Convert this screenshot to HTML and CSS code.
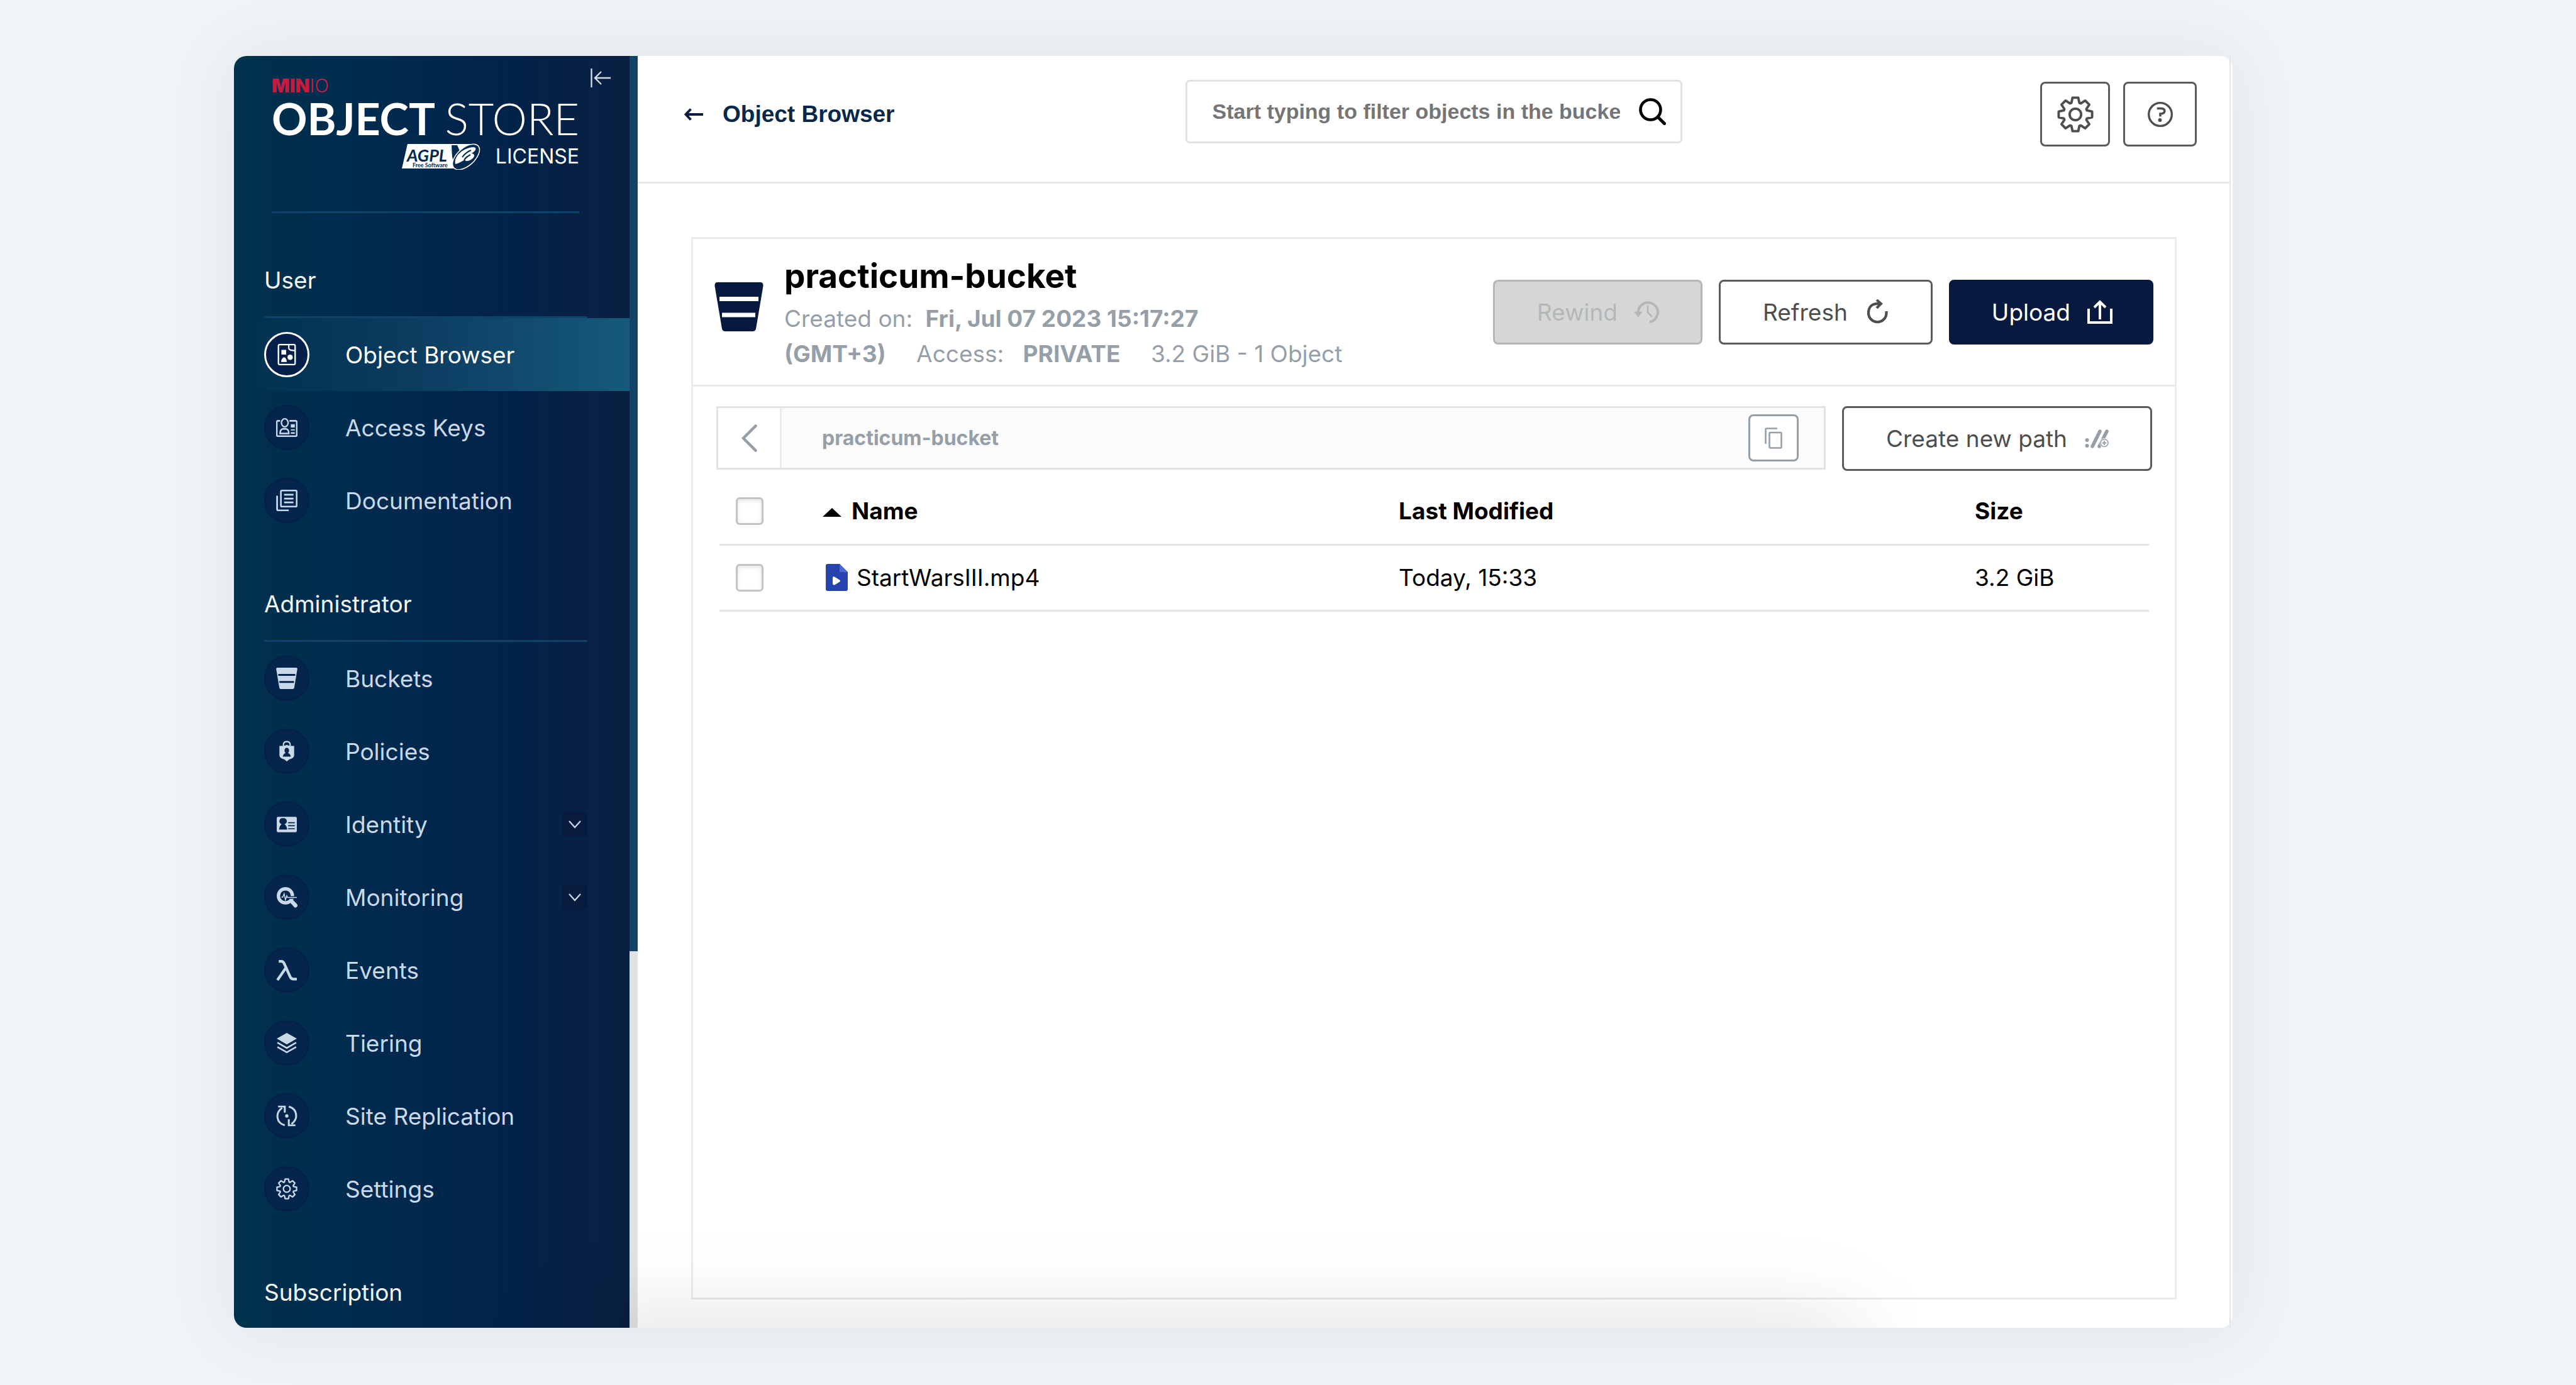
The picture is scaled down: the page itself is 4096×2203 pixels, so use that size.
FILE: index.html
```html
<!DOCTYPE html>
<html lang="en">
<head>
<meta charset="utf-8">
<title>MinIO Object Store</title>
<meta name="viewport" content="width=device-width, initial-scale=1">
<link rel="stylesheet" href="styles.css">
</head>
<body>
<svg class="symbols" aria-hidden="true">
  <symbol id="gear" viewBox="-12 -12 24 24">
    <path d="M-2.6-7.6L-1.9-11H1.9L2.6-7.6L3.54-7.21L6.43-9.12L9.12-6.43L7.21-3.54L7.6-2.6L11-1.9V1.9L7.6 2.6L7.21 3.54L9.12 6.43L6.43 9.12L3.54 7.21L2.6 7.6L1.9 11H-1.9L-2.6 7.6L-3.54 7.21L-6.43 9.12L-9.12 6.43L-7.21 3.54L-7.6 2.6L-11 1.9V-1.9L-7.6-2.6L-7.21-3.54L-9.12-6.43L-6.43-9.12L-3.54-7.21Z" fill="none" stroke="currentColor" stroke-width="1.6" stroke-linejoin="round"/>
    <circle r="3.8" fill="none" stroke="currentColor" stroke-width="1.6"/>
  </symbol>
  <symbol id="bucket" viewBox="0 0 78 78">
    <path fill="currentColor" fill-rule="evenodd" d="M5 0H73Q78 0 77.500 6L66 74Q65 78 61 78H17Q13 78 12 74L0.500 6Q0 0 5 0ZM8 23V30H70V23ZM12 48.500V55.500H65V48.500Z"/>
  </symbol>
  <symbol id="chevron" viewBox="0 0 20 20">
    <path d="M1 5L10 15L19 5" fill="none" stroke="currentColor" stroke-width="2.200"/>
  </symbol>
</svg>

<div class="app">
  <aside class="sidebar">
    <div class="sidebar-body">
      <button class="collapse" type="button" aria-label="Collapse menu">
        <svg viewBox="0 0 32 30"><path d="M1.500 0V30M7 15H32M17 5L7 15L17 25" fill="none" stroke="currentColor" stroke-width="2.400"/></svg>
      </button>
      <div class="logo">
        <div class="logo-brand"><b>MIN</b>IO</div>
        <div class="logo-name"><b>OBJECT</b><span>STORE</span></div>
        <div class="logo-license">
          <svg class="agpl" viewBox="0 0 125 42" role="img" aria-label="AGPL v3 Free Software">
            <path d="M9 1H118L88 40H0Z" fill="#fff"/>
            <text class="agpl-name" x="8" y="29">AGPL</text>
            <text class="agpl-note" x="17" y="38">Free Software</text>
            <path d="M76 3L82 30L92 12L88 3Z" fill="#022950"/>
            <path d="M76 3L80 24L79 3Z" fill="#fff"/>
            <ellipse cx="102" cy="21.500" rx="26" ry="14" transform="rotate(-42 102 21.500)" fill="#022950" stroke="#fff" stroke-width="1.500"/>
            <path d="M85 33C82 22 96 7 114 6C121 7 116 14 110 16C120 16 114 27 104 28C100 29 100 25 103 24C98 27 91 32 85 33Z" fill="#fff"/>
            <path d="M96 22Q102 14 110 11M99 26Q103 21 109 18" stroke="#022950" stroke-width="2" fill="none"/>
          </svg>
          <span>LICENSE</span>
        </div>
      </div>
      <nav>
        <section class="group">
          <h2 class="group-head">User</h2>
          <a class="item active" href="#"><span class="disc"><svg viewBox="0 0 32 32"><rect x="3.500" y="1" width="25" height="30" rx="2" fill="none" stroke="currentColor" stroke-width="2.200"/><path d="M19 1V7Q20 10 28 10" fill="none" stroke="currentColor" stroke-width="2"/><path d="M8 9H15V16H8ZM7.500 27Q8 21 12 20Q15.500 21 16 27Z" fill="currentColor"/><circle cx="21" cy="20" r="4" fill="currentColor"/></svg></span>Object Browser</a>
          <a class="item" href="#"><span class="disc"><svg viewBox="0 0 32 32"><path d="M6 6H3Q1 6 1 8V27Q1 29 3 29H29Q31 29 31 27V8Q31 6 29 6H20" fill="none" stroke="currentColor" stroke-width="2.400"/><ellipse cx="13" cy="9" rx="5" ry="6" fill="none" stroke="currentColor" stroke-width="2.200"/><path d="M6 25Q6 19 10 18H15Q19 19 19 25Z" fill="none" stroke="currentColor" stroke-width="2.400"/><path d="M22 11H28V16H22ZM22 18.500H28V20.500H22ZM22 23H28V25.500H22Z" fill="currentColor"/></svg></span>Access Keys</a>
          <a class="item" href="#"><span class="disc"><svg viewBox="0 0 32 32"><rect x="7.200" y="1.200" width="23.600" height="24" rx="1.500" fill="none" stroke="currentColor" stroke-width="2.400"/><path d="M12 7.500H26M12 13.200H26M12 19H26" stroke="currentColor" stroke-width="2.600"/><path d="M1.500 9V29Q1.500 31 3.500 31H19" fill="none" stroke="currentColor" stroke-width="2.600"/></svg></span>Documentation</a>
        </section>
        <section class="group">
          <h2 class="group-head">Administrator</h2>
          <a class="item" href="#"><span class="disc"><svg><use href="#bucket"/></svg></span>Buckets</a>
          <a class="item" href="#"><span class="disc"><svg viewBox="0 0 32 32"><path d="M11 8V6Q11 1.500 16 1.500Q21 1.500 21 6V8" fill="none" stroke="currentColor" stroke-width="2"/><path fill="currentColor" fill-rule="evenodd" d="M5 8Q11 8.500 16 6.500Q21 8.500 27 8V22Q27 26 20 28L16 31L12 28Q5 26 5 22ZM16 10.500A4 4.500 0 0 0 14 18.500Q10.500 20 10 24H22Q21.500 20 18 18.500A4 4.500 0 0 0 16 10.500Z"/></svg></span>Policies</a>
          <a class="item" href="#"><span class="disc"><svg viewBox="0 0 32 32"><path fill="currentColor" fill-rule="evenodd" d="M3 5H29Q31 5 31 7V26Q31 28 29 28H3Q1 28 1 26V7Q1 5 3 5ZM10.500 7A4.500 4.500 0 0 0 8.500 16Q5 18 4.500 24H16.500Q16 18 12.500 16A4.500 4.500 0 0 0 10.500 7ZM18 13V14.500H28V13ZM18 17.500V19H28V17.500ZM18 22V23.500H28V22Z"/></svg></span>Identity<span class="toggle"><svg><use href="#chevron"/></svg></span></a>
          <a class="item" href="#"><span class="disc"><svg viewBox="0 0 32 32"><circle cx="14" cy="14" r="10.500" fill="none" stroke="currentColor" stroke-width="5"/><path d="M23 22L29 28.500" stroke="currentColor" stroke-width="6" stroke-linecap="round"/><path d="M20 16.500H31" stroke="#05254c" stroke-width="4"/><path d="M8 16H10L12 11L14 20L16 14L17 16.500H31" fill="none" stroke="currentColor" stroke-width="1.500"/></svg></span>Monitoring<span class="toggle"><svg><use href="#chevron"/></svg></span></a>
          <a class="item" href="#"><span class="disc"><svg viewBox="0 0 32 32"><path d="M4 3H8Q11 3 12.500 7L21 26Q22.500 29.500 26 29.500H31M14.500 13L2 31" fill="none" stroke="currentColor" stroke-width="4"/></svg></span>Events</a>
          <a class="item" href="#"><span class="disc"><svg viewBox="0 0 32 32"><path d="M16 1L31 9.500L16 18L1 9.500Z" fill="currentColor"/><path d="M2 15.500L16 23.500L30 15.500M2 22L16 30L30 22" fill="none" stroke="currentColor" stroke-width="2.400"/></svg></span>Tiering</a>
          <a class="item" href="#"><span class="disc"><svg viewBox="0 0 32 32"><path d="M13 30Q2 27 2 16Q2 9 9 4M19 2Q30 5 30 16Q30 23 23 28" fill="none" stroke="currentColor" stroke-width="2.800"/><path d="M3 2H13V11M29 30H19V21" fill="none" stroke="currentColor" stroke-width="2.800"/><circle cx="16" cy="16" r="2.500" fill="currentColor"/></svg></span>Site Replication</a>
          <a class="item" href="#"><span class="disc"><svg><use href="#gear"/></svg></span>Settings</a>
        </section>
        <section class="group">
          <h2 class="group-head">Subscription</h2>
        </section>
      </nav>
    </div>
    <div class="scrollbar"><div class="thumb"></div></div>
  </aside>

  <main class="main">
    <header class="topbar">
      <a class="back" href="#">
        <svg viewBox="0 0 30 20"><path d="M2 10H30M10.500 1.500L2.500 10L10.500 18.500" fill="none" stroke="currentColor" stroke-width="4"/></svg>
        Object Browser
      </a>
      <div class="search">
        <input type="text" aria-label="Filter objects" placeholder="Start typing to filter objects in the bucket">
        <svg viewBox="0 0 43 43"><circle cx="18.500" cy="18.500" r="16" fill="none" stroke="currentColor" stroke-width="4.600"/><path d="M30 30L40.500 40.500" stroke="currentColor" stroke-width="5" stroke-linecap="round"/></svg>
      </div>
      <div class="actions">
        <button class="btn square" type="button" aria-label="Settings"><svg class="icon-gear"><use href="#gear"/></svg></button>
        <button class="btn square wide" type="button" aria-label="Help"><svg class="icon-help" viewBox="0 0 38 38"><circle cx="19" cy="19" r="17.400" fill="none" stroke="currentColor" stroke-width="3.200"/><path d="M14 10H20Q25.500 10 25.500 13.800Q25.500 18 19 18V22" fill="none" stroke="currentColor" stroke-width="3.400"/><circle cx="18.500" cy="27.500" r="2.800" fill="currentColor"/></svg></button>
      </div>
    </header>

    <section class="panel">
      <div class="bucket-head">
        <svg class="bucket-icon"><use href="#bucket"/></svg>
        <div class="bucket-info">
          <h1>practicum-bucket</h1>
          <p><span>Created on:</span> <b class="date">Fri, Jul 07 2023 15:17:27<br>(GMT+3)</b> <span class="gap">Access:</span> <b class="access">PRIVATE</b> <span class="gap">3.2 GiB - 1 Object</span></p>
        </div>
        <div class="bucket-actions">
          <button class="btn" type="button" disabled>Rewind <svg viewBox="0 0 40 40"><path d="M6 24V20A15.500 15.500 0 1 1 24 36" fill="none" stroke="currentColor" stroke-width="4"/><path d="M0 20H12L6 28Z" fill="currentColor" stroke="currentColor"/><path d="M21 10V21L28 28" fill="none" stroke="currentColor" stroke-width="2.600"/></svg></button>
          <button class="btn" type="button">Refresh <svg viewBox="0 0 40 40"><path d="M24 7Q6 6 6 22A14.200 14.200 0 0 0 34.500 22V19" fill="none" stroke="currentColor" stroke-width="4.200"/><path d="M19 1L26 7L19 14" fill="none" stroke="currentColor" stroke-width="4"/></svg></button>
          <button class="btn primary" type="button">Upload <svg viewBox="0 0 40 40"><path d="M2 15V37H38V15M20 32V6M11 13L20 4L29 13" fill="none" stroke="currentColor" stroke-width="4"/></svg></button>
        </div>
      </div>

      <div class="path-row">
        <div class="path">
          <button class="path-back" type="button" aria-label="Up one level"><svg viewBox="0 0 26 46"><path d="M23.500 2.500L3 23L23.500 43.500" fill="none" stroke="currentColor" stroke-width="4.600" stroke-linecap="round"/></svg></button>
          <a class="crumb" href="#">practicum-bucket</a>
          <button class="copy" type="button" aria-label="Copy path"><svg viewBox="0 0 28 34"><rect x="7.500" y="8" width="19" height="24.500" rx="1.500" fill="none" stroke="currentColor" stroke-width="2.600"/><path d="M1.500 26V3Q1.500 1.500 3 1.500H20" fill="none" stroke="currentColor" stroke-width="2.600"/></svg></button>
        </div>
        <button class="btn" type="button">Create new path <svg class="icon-path" viewBox="0 0 40 40"><circle cx="4.500" cy="22" r="3" /><circle cx="4.500" cy="31" r="3"/><path d="M13 32L25 8M24 32L36 8" fill="none" stroke="currentColor" stroke-width="5.500" stroke-linecap="round"/><circle cx="32" cy="26.500" r="7.500" fill="#fff"/><circle cx="32" cy="26.500" r="6" fill="none" stroke="currentColor" stroke-width="1.600"/><path d="M32 23V30M28.500 26.500H35.500" stroke="currentColor" stroke-width="1.800"/></svg></button>
      </div>

      <table class="objects">
        <colgroup><col class="col-check"><col class="col-name"><col class="col-date"><col></colgroup>
        <thead>
          <tr>
            <th><input type="checkbox" aria-label="Select all"></th>
            <th><span class="sort"></span>Name</th>
            <th>Last Modified</th>
            <th>Size</th>
          </tr>
        </thead>
        <tbody>
          <tr>
            <td><input type="checkbox" aria-label="Select StartWarsIII.mp4"></td>
            <td><a class="file" href="#"><svg viewBox="0 0 35 43"><path d="M3 0H22L35 13V40Q35 43 32 43H3Q0 43 0 40V3Q0 0 3 0Z" fill="#2544ad"/><path d="M22 0L35 13H22Z" fill="#4c68cd"/><path d="M11 22Q11 19 14 20.500L22 25.500Q24 27 22 28.500L14 33.500Q11 34 11 31Z" fill="#fff"/></svg>StartWarsIII.mp4</a></td>
            <td>Today, 15:33</td>
            <td>3.2 GiB</td>
          </tr>
        </tbody>
      </table>
    </section>
  </main>
  <div class="edge-shade"></div>
</div>
</body>
</html>
```

FILE: styles.css
```css
* { box-sizing: border-box; }

body {
  margin: 0;
  height: 100vh;
  display: flex;
  padding: 89px 546px 91px 372px;
  background: #eef4f7;
  font-family: Inter, "Liberation Sans", sans-serif;
  font-size: 37px;
  color: #000;
}

h1, h2, p { margin: 0; }
a { color: inherit; text-decoration: none; }
button, input { font: inherit; }
svg { display: block; flex: none; }
.symbols { position: absolute; width: 0; height: 0; }

.app {
  flex: 1;
  min-height: 0;
  position: relative;
  display: flex;
  background: #fff;
  border-radius: 20px;
  box-shadow: 0 0 110px 10px rgba(0, 0, 0, 0.06);
}

/* Sidebar */
.sidebar {
  flex: none;
  width: 642px;
  display: flex;
  overflow: hidden;
  border-radius: 20px 0 0 20px;
}
.sidebar-body {
  flex: 1;
  position: relative;
  background: linear-gradient(90deg, #00324d 0%, #00294e 40%, #02234a 65%, #0a2042 100%);
}
.scrollbar { width: 13px; background: #e2e2e2; }
.thumb { height: 70.4%; background: #11436a; }

.collapse {
  position: absolute;
  top: 20px;
  right: 30px;
  padding: 0;
  border: 0;
  background: none;
  color: #d5dbe4;
}
.collapse svg { width: 32px; height: 30px; }

.logo {
  margin: 0 80px 0 60px;
  padding-top: 31px;
  height: 250px;
  border-bottom: 3px solid #0f4269;
  color: #fff;
  font-family: Lato, sans-serif;
  font-weight: 300;
}
.logo-brand { font-family: Inter, sans-serif; font-size: 30px; line-height: 32px; color: #c51b3f; }
.logo-brand b { font-weight: 900; }
.logo-name {
  display: flex;
  justify-content: space-between;
  font-size: 70px;
  line-height: 72px;
}
.logo-name b { font-weight: 700; }
.logo-license {
  display: flex;
  justify-content: flex-end;
  align-items: center;
  gap: 24px;
  margin-top: 4px;
  font-family: Inter, sans-serif;
  font-size: 32px;
  font-weight: 400;
  line-height: 42px;
}
.agpl { width: 125px; height: 42px; }
.agpl-name { font: italic 700 27px Lato, sans-serif; fill: #022950; }
.agpl-note { font: 700 9px Lato, sans-serif; fill: #022950; }

.group-head {
  margin: 0 67px 0 48px;
  padding: 80px 0 30px;
  border-bottom: 3px solid #0f4269;
  font-size: 37px;
  line-height: 54px;
  font-weight: 400;
  color: #f4f7fa;
}
.item {
  display: flex;
  align-items: center;
  height: 116px;
  padding: 0 67px 0 48px;
  font-size: 37px;
  color: #c9d9e9;
}
.item.active {
  color: #fff;
  background: linear-gradient(90deg, rgba(21, 90, 122, 0) 0%, #0f4568 62%, #155a7a 100%);
}
.disc {
  flex: none;
  display: flex;
  align-items: center;
  justify-content: center;
  width: 72px;
  height: 72px;
  margin-right: 57px;
  border: 2px solid #061f49;
  border-radius: 50%;
  background: #05254c;
}
.disc svg { width: 34px; height: 34px; }
.active .disc { border: 3px solid #fff; background: #04204b; }
.toggle {
  display: flex;
  align-items: center;
  justify-content: center;
  width: 40px;
  height: 40px;
  margin-left: auto;
  border-radius: 5px;
  background: #081b3e;
}
.toggle svg { width: 20px; height: 20px; }

/* Main column */
.main {
  flex: 1;
  min-width: 0;
  display: flex;
  flex-direction: column;
  margin-right: 3px;
  border-right: 2px solid #e3e5e6;
}
.topbar {
  display: grid;
  grid-template-columns: 1fr 790px 1fr;
  align-items: start;
  padding: 38px 52px 53px;
  border-bottom: 3px solid #e6e8e9;
}
.back {
  display: flex;
  align-items: center;
  gap: 31px;
  padding-left: 22px;
  height: 109px;
  font-family: "Liberation Sans", Arial, sans-serif;
  font-weight: 700;
  color: #07284a;
}
.back svg { width: 30px; height: 20px; color: #081c42; }
.search { position: relative; }
.search input {
  display: block;
  width: 100%;
  height: 101px;
  padding: 0 96px 0 40px;
  border: 3px solid #e2e2e2;
  border-radius: 7px;
  background: #fff;
  font: 700 34px "Liberation Sans", Arial, sans-serif;
  color: #000;
}
.search input::placeholder { color: #757575; opacity: 1; }
.search svg { position: absolute; right: 26px; top: 29px; width: 43px; height: 43px; }
.actions { display: flex; justify-content: flex-end; gap: 21px; padding-top: 3px; }

.btn {
  display: flex;
  align-items: center;
  gap: 27px;
  height: 103px;
  padding: 0 65px 0 67px;
  border: 3px solid #5a5c5c;
  border-radius: 8px;
  background: #fff;
  font-size: 37px;
  color: #4d4f4f;
  white-space: nowrap;
}
.btn svg { width: 40px; height: 40px; }
.btn:disabled { background: #d5d7d7; border-color: #b5b7b7; color: #b5b7b7; }
.btn.primary { padding: 0 62px 0 65px; background: #07193e; border-color: #07193e; color: #fff; }
.btn.square { width: 111px; padding: 0; justify-content: center; }
.btn.wide { width: 117px; }
.btn .icon-gear { width: 58px; height: 58px; }
.btn .icon-help { width: 40px; height: 40px; }
.btn .icon-path { color: #969fa8; fill: #969fa8; }

.panel {
  flex: 1;
  margin: 85px 84px 45px 85px;
  border: 3px solid #eaecec;
}
.bucket-head {
  display: flex;
  align-items: center;
  height: 235px;
  padding: 0 34px;
  border-bottom: 3px solid #eaecec;
}
.bucket-icon { width: 78px; height: 78px; margin-right: 33px; margin-top: -16px; color: #07193e; }
.bucket-info { flex: 1; margin-top: -2px; }
.bucket-info h1 { font-size: 53px; line-height: 80px; font-weight: 700; }
.bucket-info p { line-height: 56px; color: #969fa8; }
.bucket-info b { font-weight: 700; }
.date { margin-left: 10px; }
.gap { margin-left: 38px; }
.access { margin-left: 20px; }
.bucket-actions { display: flex; gap: 26px; }

.path-row { display: flex; gap: 26px; padding: 31px 36px 0 37px; }
.path {
  flex: 1;
  display: flex;
  align-items: center;
  height: 101px;
  border: 3px solid #e2e2e2;
  background: #fbfbfb;
  color: #969fa8;
}
.path-back {
  display: flex;
  align-items: center;
  justify-content: center;
  align-self: stretch;
  width: 101px;
  padding: 0;
  border: 0;
  border-right: 3px solid #eaeded;
  background: #fff;
  color: #969fa8;
}
.path-back svg { width: 25px; height: 44px; }
.crumb { flex: 1; padding-left: 64px; font-size: 32px; font-weight: 700; }
.copy {
  display: flex;
  align-items: center;
  justify-content: center;
  width: 80px;
  height: 75px;
  margin-right: 40px;
  padding: 0;
  border: 3px solid #969fa8;
  border-radius: 8px;
  background: #fff;
  color: #969fa8;
}
.copy svg { width: 28px; height: 34px; }

/* Object list */
.objects {
  width: calc(100% - 83px);
  margin: 12px 41px 0 42px;
  table-layout: fixed;
  border-collapse: collapse;
}
.col-check { width: 164px; }
.col-name, .col-date { width: 40.3%; }
.objects th, .objects td {
  height: 105px;
  padding: 0;
  border-bottom: 3px solid #e2e3e3;
  text-align: left;
  vertical-align: middle;
}
.objects th { font-size: 37px; font-weight: 700; }
.objects input {
  appearance: none;
  display: block;
  width: 44px;
  height: 44px;
  margin: 0 0 0 26px;
  border: 3px solid #c4c4c4;
  border-radius: 6px;
  background: #fff;
  box-shadow: inset 0 2px 6px rgba(0, 0, 0, 0.12);
}
.sort {
  display: inline-block;
  margin-right: 16px;
  vertical-align: 4px;
  border: 15px solid transparent;
  border-top: 0;
  border-bottom: 14px solid #000;
}
.file { display: flex; align-items: center; gap: 14px; padding-left: 5px; }
.file svg { width: 35px; height: 43px; }

/* Soft shade rising from below the window's lower edge */
.edge-shade {
  position: absolute;
  inset: 0 5px 0 0;
  overflow: hidden;
  pointer-events: none;
  border-radius: 20px;
}
.edge-shade::after {
  content: "";
  position: absolute;
  top: 100%;
  left: 17%;
  right: 19%;
  height: 300px;
  box-shadow: 0 0 160px rgba(0, 0, 0, 0.15);
}
```
